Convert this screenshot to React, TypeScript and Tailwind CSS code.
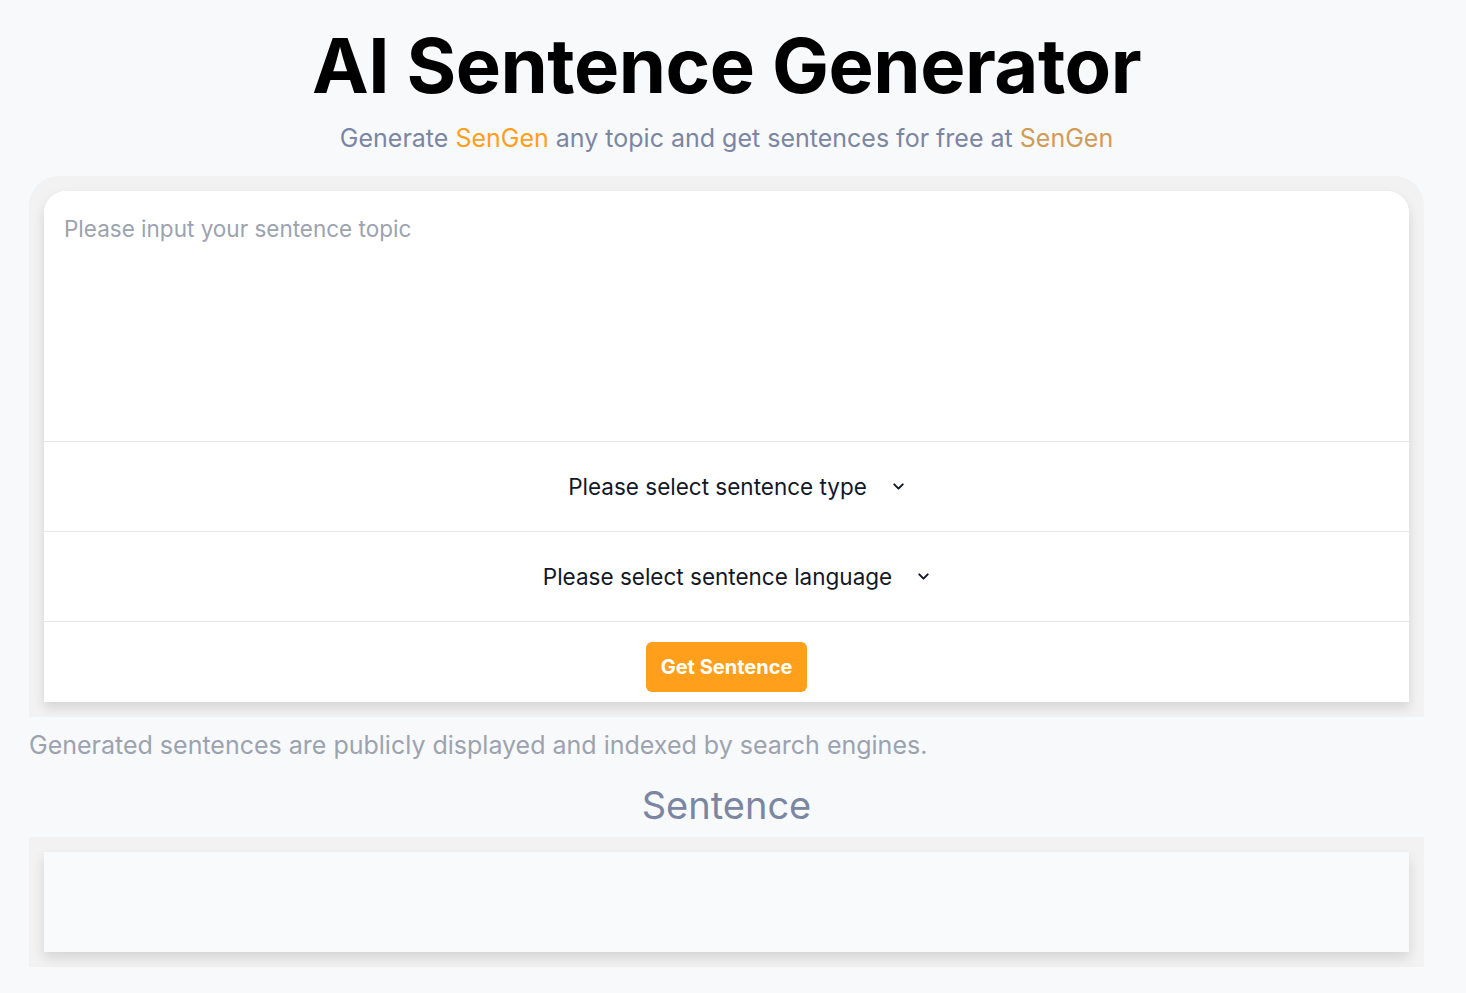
import { ChevronDown } from 'lucide-react'

const font = { fontFamily: 'Inter, "Noto Sans", sans-serif' }

function SelectRow({ label }: { label: string }) {
  return (
    <div className="flex h-[90px] items-center justify-center border-t border-[#e5e7eb] pl-[22px]">
      <div className="flex items-center gap-[23px] text-[22.5px] text-[#111827]">
        <span>{label}</span>
        <ChevronDown className="h-[17px] w-[17px]" strokeWidth={2.75} />
      </div>
    </div>
  )
}

export default function App() {
  return (
    <div className="min-h-screen bg-[#f8f9fb] pb-8" style={font}>
      <div className="ml-[29px] w-[1395px]">
        {/* Header */}
        <div className="flex flex-col items-center pt-[19px]">
          <h1 className="text-[76px] font-bold leading-[92px] tracking-[-0.5px] text-black">
            AI Sentence Generator
          </h1>
          <p className="mt-[11px] text-[25px] leading-[32px] text-[#7b86a3]">
            Generate <span className="text-[#ff9f1c]">SenGen</span> any topic and get sentences for free at{' '}
            <span className="text-[#d29b55]">SenGen</span>
          </p>
        </div>

        {/* Form */}
        <div className="mt-[22px] rounded-t-[30px] bg-[#f2f2f2] p-[15px]">
          <div className="overflow-hidden rounded-t-[22px] bg-white shadow-[0_6px_12px_rgba(0,0,0,0.12)]">
            <textarea
              className="block h-[250px] w-full resize-none bg-white px-5 py-[23px] text-[22.5px] leading-[30px] text-[#111827] outline-none placeholder:text-[#9ca3af]"
              placeholder="Please input your sentence topic"
            />
            <SelectRow label="Please select sentence type" />
            <SelectRow label="Please select sentence language" />
            <div className="flex h-[81px] items-start justify-center border-t border-[#e5e7eb] pt-[20px]">
              <button className="h-[50px] w-[161px] rounded-md bg-[#ff9f1c] text-[20px] font-bold text-white">
                Get Sentence
              </button>
            </div>
          </div>
        </div>

        <p className="mt-[12px] text-[25px] leading-[32px] text-[#9ca3af]">
          Generated sentences are publicly displayed and indexed by search engines.
        </p>

        <h2 className="mt-[20px] text-center text-[38px] leading-[48px] text-[#7b86a3]">Sentence</h2>

        {/* Result */}
        <div className="mt-[8px] bg-[#f2f2f2] p-[15px]">
          <div className="h-[100px] bg-[#f9fafb] shadow-[0_6px_12px_rgba(0,0,0,0.12)]" />
        </div>
      </div>
    </div>
  )
}
